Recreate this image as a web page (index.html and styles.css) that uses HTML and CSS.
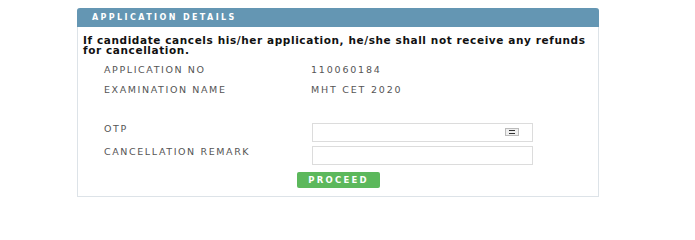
FILE: index.html
```html
<!DOCTYPE html>
<html>
<head>
<meta charset="utf-8">
<link rel="stylesheet" href="styles.css">
</head>
<body>
<div class="panel">
  <div class="panel-head">APPLICATION DETAILS</div>
  <div class="panel-body">
    <p class="warn">If candidate cancels his/her application, he/she shall not receive any refunds for cancellation.</p>
    <div class="row info"><span class="label">APPLICATION NO</span><span class="value">110060184</span></div>
    <div class="row info"><span class="label">EXAMINATION NAME</span><span class="value">MHT CET 2020</span></div>
    <div class="row field first"><span class="label">OTP</span>
      <span class="input"><span class="spin"><i></i><i></i></span></span>
    </div>
    <div class="row field"><span class="label">CANCELLATION REMARK</span><span class="input"></span></div>
    <div class="actions"><button class="btn">PROCEED</button></div>
  </div>
</div>
</body>
</html>
```
FILE: styles.css
```css
* { box-sizing: border-box; }
body {
  margin: 0;
  background: #fff;
  font-family: "DejaVu Sans", "Open Sans", sans-serif;
  color: #333;
}
.panel {
  margin: 8px 0 0 77px;
  width: 522px;
  height: 189px;
  border: 1px solid #dde3e8;
  border-top: none;
  border-radius: 3px 3px 0 0;
}
.panel-head {
  height: 19px;
  margin: 0 -1px;
  background: #6496b3;
  color: #fff;
  font-size: 8px;
  font-weight: 700;
  letter-spacing: 2.4px;
  line-height: 19px;
  padding-left: 15px;
  border-radius: 3px 3px 0 0;
}
.panel-body { padding: 8px 0 0 5px; }
.warn {
  margin: 0;
  width: 508px;
  font-size: 10.5px;
  font-weight: 700;
  letter-spacing: 0.6px;
  line-height: 10px;
  color: #111;
}
.row { display: flex; align-items: center; padding-left: 21px; }
.label { width: 207px; font-size: 9.5px; letter-spacing: 1.6px; color: #555; white-space: nowrap; }
.value { font-size: 9.5px; letter-spacing: 1.8px; color: #555; }
.info { height: 20px; }
.warn + .info { margin-top: 4px; }
.field { align-items: flex-start; height: 23px; }
.field .label { line-height: 12px; }
.field.first { margin-top: 24px; }
.input {
  display: flex;
  justify-content: flex-end;
  width: 221px;
  height: 19px;
  margin-left: 1px;
  border: 1px solid #dcdcdc;
  background: #fff;
}
.spin {
  display: flex;
  flex-direction: column;
  justify-content: center;
  gap: 2px;
  width: 14px;
  height: 8px;
  margin: 4px 13px 0 0;
  border: 1px solid #bbb;
  background: #efefef;
  padding: 0 3px;
}
.spin i { display: block; height: 1px; background: #333; }
.actions { display: flex; padding-left: 214px; margin-top: 3px; }
.btn {
  width: 83px;
  height: 16px;
  padding: 0;
  border: none;
  border-radius: 2px;
  background: #5cb85c;
  color: #fff;
  font-family: inherit;
  font-size: 8.5px;
  font-weight: 700;
  letter-spacing: 2.2px;
  line-height: 16px;
}
```
